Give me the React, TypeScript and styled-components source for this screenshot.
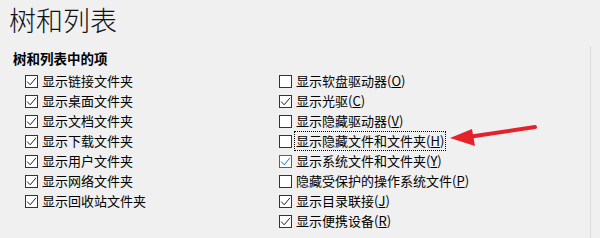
import styled, { createGlobalStyle, css } from 'styled-components'

const GlobalStyle = createGlobalStyle`
  html, body {
    margin: 0;
    padding: 0;
    background: #f0f0f0;
  }
  body {
    font-family: 'Noto Sans CJK SC', 'Noto Sans', sans-serif;
    color: #000;
  }
`

const Page = styled.div`
  position: relative;
  width: 600px;
  height: 238px;
  overflow: hidden;
  background: #f0f0f0;
`

const Title = styled.h1`
  margin: 0;
  padding: 2px 0 0 9px;
  height: 46px;
  box-sizing: border-box;
  font-size: 27px;
  font-weight: 300;
  line-height: 36px;
  color: #111;
`

const Panel = styled.section`
  width: 590px;
  height: 192px;
  border-right: 1px solid #dcdcdc;
  box-sizing: content-box;
`

const GroupLabel = styled.div`
  padding: 2px 0 0 13px;
  height: 25px;
  box-sizing: border-box;
  font-size: 13.5px;
  font-weight: 700;
  line-height: 20px;
`

const Columns = styled.div`
  display: grid;
  grid-template-columns: 254px 1fr;
  padding-left: 25px;
`

const Column = styled.div`
  display: flex;
  flex-direction: column;
`

const Row = styled.label`
  display: flex;
  align-items: center;
  height: 20px;
  gap: 3px;
  font-size: 13px;
  line-height: 18px;
  white-space: nowrap;
`

const Box = styled.span<{ $hover?: boolean }>`
  display: inline-flex;
  align-items: center;
  justify-content: center;
  width: 13px;
  height: 13px;
  box-sizing: border-box;
  border: 1px solid #333;
  background: #fff;
  color: #222;

  ${({ $hover }) =>
    $hover &&
    css`
      border-color: #0078d7;
      color: #0078d7;
    `}
`

const Caption = styled.span<{ $focused?: boolean }>`
  padding: 0 1px;
  outline: ${({ $focused }) => ($focused ? '1px dotted #000' : 'none')};
  outline-offset: 0;
`

const Arrow = styled.svg`
  position: absolute;
  left: 440px;
  top: 118px;
`

type Item = { text: string; key?: string; checked: boolean; hover?: boolean; focused?: boolean }

const leftItems: Item[] = [
  { text: '显示链接文件夹', checked: true },
  { text: '显示桌面文件夹', checked: true },
  { text: '显示文档文件夹', checked: true },
  { text: '显示下载文件夹', checked: true },
  { text: '显示用户文件夹', checked: true },
  { text: '显示网络文件夹', checked: true },
  { text: '显示回收站文件夹', checked: true },
]

const rightItems: Item[] = [
  { text: '显示软盘驱动器', key: 'O', checked: false },
  { text: '显示光驱', key: 'C', checked: true },
  { text: '显示隐藏驱动器', key: 'V', checked: false },
  { text: '显示隐藏文件和文件夹', key: 'H', checked: false, focused: true },
  { text: '显示系统文件和文件夹', key: 'Y', checked: true, hover: true },
  { text: '隐藏受保护的操作系统文件', key: 'P', checked: false },
  { text: '显示目录联接', key: 'J', checked: true },
  { text: '显示便携设备', key: 'R', checked: true },
]

const Check = () => (
  <svg width="11" height="11" viewBox="0 0 11 11">
    <path d="M1.2 5.6 L4.2 8.8 L10 1.8" fill="none" stroke="currentColor" strokeWidth="1" />
  </svg>
)

const CheckRow = ({ item }: { item: Item }) => (
  <Row>
    <Box $hover={item.hover}>{item.checked && <Check />}</Box>
    <Caption $focused={item.focused}>
      {item.text}
      {item.key && (
        <>
          (<u>{item.key}</u>)
        </>
      )}
    </Caption>
  </Row>
)

export default function App() {
  return (
    <>
      <GlobalStyle />
      <Page>
        <Title>树和列表</Title>
        <Panel>
          <GroupLabel>树和列表中的项</GroupLabel>
          <Columns>
            <Column>
              {leftItems.map((it) => (
                <CheckRow key={it.text} item={it} />
              ))}
            </Column>
            <Column>
              {rightItems.map((it) => (
                <CheckRow key={it.text} item={it} />
              ))}
            </Column>
          </Columns>
        </Panel>
        {/* 빨간 화살표 */}
        <Arrow width="100" height="30" viewBox="0 0 100 30">
          <path d="M95 9 L28 19" stroke="#e3222b" strokeWidth="4" strokeLinecap="round" fill="none" />
          <path d="M10 20 L32 11 L35 28 Z" fill="#e3222b" />
        </Arrow>
      </Page>
    </>
  )
}
